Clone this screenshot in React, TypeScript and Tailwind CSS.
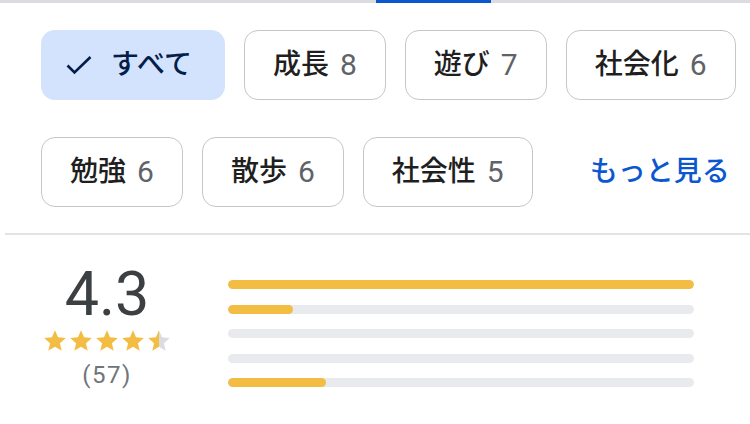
import React from "react";

const FONT = { fontFamily: 'Roboto, "Noto Sans CJK JP", sans-serif' };

function Chip({ label, count }: { label: string; count: number }) {
  return (
    <div className="h-[70px] flex items-center px-[28px] rounded-[14px] border-[1.5px] border-[#c4c7c5] bg-white">
      <span className="text-[28px] font-medium text-[#1f1f1f] leading-none">{label}</span>
      <span className="ml-[11px] text-[30px] text-[#5f6368] leading-none">{count}</span>
    </div>
  );
}

const STAR = "M12 17.27L18.18 21l-1.64-7.03L22 9.24l-7.19-.61L12 2 9.19 8.63 2 9.24l5.46 4.73L5.82 21z";

function Star({ fill }: { fill: "full" | "half" }) {
  return (
    <svg width="26" height="26" viewBox="0 0 24 24">
      <defs>
        <linearGradient id="halfstar" x1="0" x2="1" y1="0" y2="0">
          <stop offset="52%" stopColor="#f2bd42" />
          <stop offset="52%" stopColor="#dadce0" />
        </linearGradient>
      </defs>
      <path d={STAR} fill={fill === "full" ? "#f2bd42" : "url(#halfstar)"} />
    </svg>
  );
}

const bars = [100, 14, 0, 0, 21];

export default function App() {
  return (
    <div className="w-[750px] h-[424px] bg-white overflow-hidden" style={FONT}>
      <div className="h-[3px] bg-[#dadce0] flex">
        <div className="w-[376px]" />
        <div className="w-[115px] bg-[#0b57d0]" />
      </div>

      <div className="pl-[41px] pt-[27px] flex flex-col gap-[37px]">
        <div className="flex gap-[19px]">
          <div className="h-[70px] flex items-center pl-[24px] pr-[33px] rounded-[14px] bg-[#d3e3fd] gap-[18px]">
            <svg width="28" height="22" viewBox="0 0 28 22">
              <polyline points="2.5,11.5 9.5,18.5 25.5,3" fill="none" stroke="#041e49" strokeWidth="2.6" />
            </svg>
            <span className="text-[28px] font-medium text-[#041e49] leading-none">すべて</span>
          </div>
          <Chip label="成長" count={8} />
          <Chip label="遊び" count={7} />
          <Chip label="社会化" count={6} />
        </div>
        <div className="flex gap-[19px] items-center">
          <Chip label="勉強" count={6} />
          <Chip label="散歩" count={6} />
          <Chip label="社会性" count={5} />
          <span className="ml-[38px] text-[28px] font-medium text-[#0b57d0] leading-none">もっと見る</span>
        </div>
      </div>

      <div className="mt-[26px] ml-[5px] h-[2px] bg-[#e3e3e3]" />

      <div className="flex mt-[29px]">
        <div className="ml-[40px] w-[134px] flex flex-col items-center">
          <div className="text-[61px] leading-none text-[#3c4043]">4.3</div>
          <div className="flex mt-[3px]">
            <Star fill="full" />
            <Star fill="full" />
            <Star fill="full" />
            <Star fill="full" />
            <Star fill="half" />
          </div>
          <div className="text-[24px] leading-none text-[#70757a] mt-[9px] tracking-[1.5px]">(57)</div>
        </div>
        <div className="ml-[54px] w-[466px] mt-[16px] flex flex-col gap-[15.5px]">
          {bars.map((w, i) => (
            <div key={i} className="h-[9px] rounded-full bg-[#e8eaed] overflow-hidden">
              <div className="h-full rounded-full bg-[#f2bd42]" style={{ width: `${w}%` }} />
            </div>
          ))}
        </div>
      </div>
    </div>
  );
}
